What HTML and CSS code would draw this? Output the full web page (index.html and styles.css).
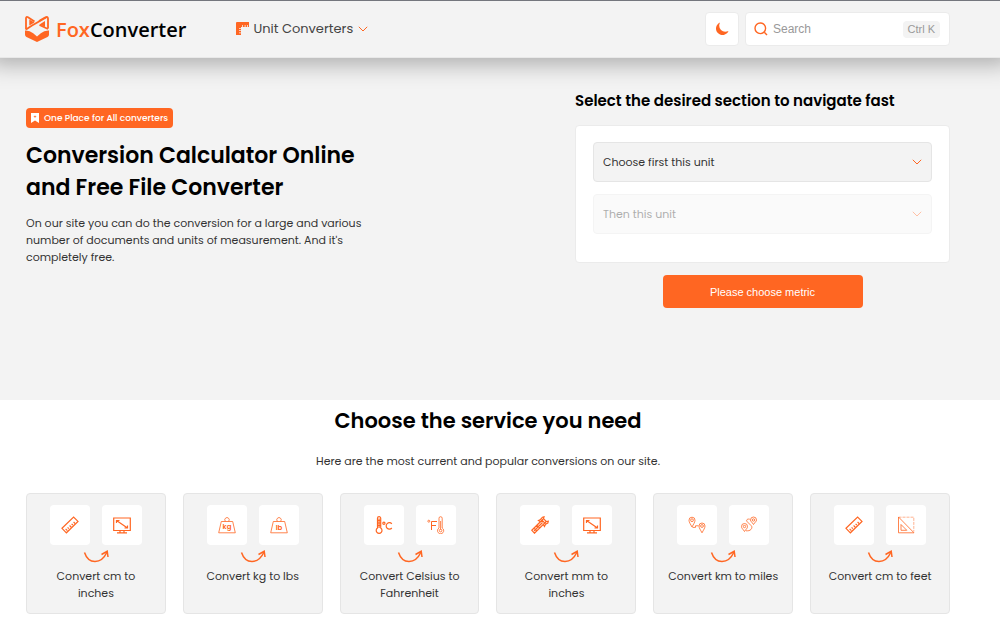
FILE: index.html
```html
<!DOCTYPE html>
<html lang="en">

<head>
    <meta charset="UTF-8">
    <meta name="viewport" content="width=device-width, initial-scale=1.0">
    <title>FoxConverter</title>
    <link rel="stylesheet" href="styles.css">
</head>

<body>
    <!-- shared icons -->
    <svg class="sprite" aria-hidden="true">
        <symbol id="chevron" viewBox="0 0 10 6">
            <path d="M.8 .8 5 5 9.2 .8" />
        </symbol>
        <symbol id="arrow" viewBox="0 0 26 13">
            <path d="M1.500 2.500C3.500 8.500 7.500 11.500 12 11.500C17 11.500 21.500 7.500 24 2" />
            <path d="M18.500 4.500 24.200 1.300 25 7" />
        </symbol>
        <symbol id="ruler" viewBox="0 0 18 18">
            <path d="M1 12.300 12.600 1 17 5.400 5.400 16.800Z" />
            <path d="M4.600 12.800 6.400 14.600M6.600 11.400 7.800 12.600M8.600 9.500 10.400 11.300M10.600 7.800 11.800 9M12.600 6 14.200 7.600" />
        </symbol>
        <symbol id="monitor" viewBox="0 0 18 18">
            <path d="M.7 2H17.300V14.500H.7ZM7 14.500V16.500M11 14.500V16.500M4 16.800H14M3.500 4.500 14.500 12M3.500 7V4.500H6.500M14.500 9.500V12H11.500" />
        </symbol>
        <symbol id="kg" viewBox="0 0 18 18">
            <path d="M3.300 5.500H14.700L17.300 16.800H.7ZM7.400 5.300A2.200 2.200 0 1 1 10.600 5.300" />
            <text class="unit" x="9" y="13">kg</text>
        </symbol>
        <symbol id="lb" viewBox="0 0 18 18">
            <path d="M3.300 5.500H14.700L17.300 16.800H.7ZM7.400 5.300A2.200 2.200 0 1 1 10.600 5.300" />
            <text class="unit" x="9" y="14">lb</text>
        </symbol>
        <symbol id="celsius" viewBox="0 0 18 18">
            <path d="M2.500 12V2.300A1.600 1.600 0 0 1 5.700 2.300V12A2.900 2.900 0 1 1 2.500 12ZM4.100 2.500V12M2.500 4.500H5.700M2.500 7H5.700M2.500 9.500H5.700" />
            <circle cx="8.900" cy="7.200" r="1.100" />
            <path d="M16.800 7.800A3.200 3.200 0 1 0 16.800 12" />
        </symbol>
        <symbol id="fahrenheit" viewBox="0 0 18 18">
            <path d="M12 12V2.300A1.600 1.600 0 0 1 15.200 2.300V12A3.100 3.100 0 1 1 12 12ZM13.600 5V13.500" />
            <circle cx="13.600" cy="14.600" r="1.300" />
            <circle cx="1.800" cy="5.200" r="1" />
            <path stroke-width="1" d="M4.500 14V5.500H10M4.500 9.500H9" />
        </symbol>
        <symbol id="caliper" viewBox="0 0 18 18">
            <path d="M.8 14.300 11 4.200 13.800 7 3.500 17.200ZM3 12.200 5.800 15M6 9.200 8.800 12M3 15 11.500 6.500" />
            <path d="M9.500 5.700 7.500 4.500 9.500 3.500 11.500 1.200 13 .8 12.500 2.700 11 4.200M12.500 2.700 15.300 5.500 13.800 7M15.300 5.500 17.300 5.200 16.800 7 14.500 8.300 13.500 10.500 12.300 8.500" />
        </symbol>
        <symbol id="pins" viewBox="0 0 18 18">
            <path d="M4 11C2.500 8.200 1 6.200 1 4.200A3 3 0 0 1 7 4.200C7 6.200 5.500 8.200 4 11ZM14 16.800C12.500 14 11 12 11 10A3 3 0 0 1 17 10C17 12 15.500 14 14 16.800ZM4.500 11.400H7.500V9.800H10.500" />
            <circle cx="4" cy="4.200" r="1.400" />
            <circle cx="14" cy="10" r="1.400" />
        </symbol>
        <symbol id="route" viewBox="0 0 18 18">
            <path d="M4.500 15.500C3 13 1.500 12.500 1.500 10.500A3 3 0 0 1 7.500 10.500C7.500 12.500 6 13 4.500 15.500ZM13.500 8.500C12 6 10.500 5.500 10.500 4A3 3 0 0 1 16.500 4C16.500 5.500 15 6 13.500 8.500ZM9.800 3.200C7 2.500 5.500 4.500 7.500 6L11 9.500C13 11 11.500 14.800 7.500 14.800H6" />
            <circle cx="4.500" cy="10.500" r="1.200" />
            <circle cx="13.500" cy="4" r="1.200" />
        </symbol>
        <symbol id="triangle" viewBox="0 0 18 18">
            <path d="M1.500 1V16.800H17ZM4 8.500V14.300H9.800Z" />
            <path stroke-width=".5" stroke-dasharray="3 1" d="M1.500 1.200H16.800V15.500" />
        </symbol>
    </svg>

    <header class="header">
        <a class="logo" href="#">
            <svg class="logo-icon" viewBox="0 0 24 26" aria-hidden="true">
                <path fill="none" stroke="currentColor" stroke-width="1.800" stroke-linejoin="round" d="M1 13.500V2.200Q1.200 .3 3 1.200L9.500 5.500M14 5L20.500 1.300Q22.800 .3 23 2.500V12.500" />
                <path fill="none" stroke="currentColor" stroke-width="1.800" stroke-linejoin="round" d="M1 13.500 7 9.500 21 1.500M23 13 14.500 9" />
                <path fill="currentColor" d="M4.300 3.500 9.500 6.500 4.300 9.500ZM20 5V11L14.500 8.500Z" />
                <path fill="currentColor" d="M0 14.500Q4.500 14.200 8.200 17.200L12 20.500 15.800 17.200Q19.500 14.200 24 14.500V18.500Q24 20 22.500 21L12 26 1.500 21Q0 20 0 18.500Z" />
            </svg>
            <span class="logo-text"><span class="logo-fox">Fox</span>Converter</span>
        </a>
        <nav class="nav">
            <button class="nav-item" type="button">
                <svg class="nav-icon" viewBox="0 0 14 14" aria-hidden="true">
                    <path fill="currentColor" d="M0 1Q0 0 1 0H13V5H11.800V3H11V5H9.500V3H8.700V5H7V3H6.200V5H5V6H3V6.800H5V8.300H3V9.100H5V10.500H3V11.300H5V13H0Z" />
                </svg>
                Unit Converters
                <svg class="chevron" aria-hidden="true"><use href="#chevron" /></svg>
            </button>
        </nav>
        <button class="theme" type="button" aria-label="Dark mode">
            <svg class="moon" viewBox="0 0 14 14" aria-hidden="true">
                <path fill="currentColor" d="M5 .5A6.500 6.500 0 1 0 13.500 9Q9 11 6 8T5 .5Z" />
            </svg>
        </button>
        <form class="search">
            <svg class="search-icon" viewBox="0 0 14 14" aria-hidden="true">
                <circle cx="6.300" cy="6.300" r="5.300" />
                <path d="M10.300 10.300 13 13" />
            </svg>
            <input class="search-input" type="text" placeholder="Search" aria-label="Search">
            <kbd class="shortcut">Ctrl K</kbd>
        </form>
    </header>

    <main>
        <section class="hero">
            <div class="intro">
                <span class="badge">
                    <svg class="badge-icon" viewBox="0 0 8 10" aria-hidden="true">
                        <path fill="currentColor" fill-rule="evenodd" d="M0 0H8V10L4 7.500 0 10ZM3.700 2.400V3.300H2.800V4H3.700V4.900H4.300V4H5.200V3.300H4.300V2.400Z" />
                    </svg>
                    One Place for All converters
                </span>
                <h1 class="title">Conversion Calculator Online and Free File Converter</h1>
                <p class="text">On our site you can do the conversion for a large and various number of documents and units of measurement. And it's completely free.</p>
            </div>
            <form class="picker">
                <h2 class="picker-title">Select the desired section to navigate fast</h2>
                <div class="picker-box">
                    <div class="field">
                        <select class="select" aria-label="First unit">
                            <option>Choose first this unit</option>
                        </select>
                        <svg class="chevron" aria-hidden="true"><use href="#chevron" /></svg>
                    </div>
                    <div class="field field-off">
                        <select class="select" aria-label="Second unit" disabled>
                            <option>Then this unit</option>
                        </select>
                        <svg class="chevron" aria-hidden="true"><use href="#chevron" /></svg>
                    </div>
                </div>
                <button class="submit" type="button">Please choose metric</button>
            </form>
        </section>

        <section class="services">
            <h2 class="services-title">Choose the service you need</h2>
            <p class="services-text">Here are the most current and popular conversions on our site.</p>
            <div class="cards">
                <a class="card" href="#">
                    <span class="tiles">
                        <span class="tile"><svg class="icon"><use href="#ruler" /></svg></span>
                        <span class="tile"><svg class="icon"><use href="#monitor" /></svg></span>
                    </span>
                    <svg class="arrow"><use href="#arrow" /></svg>
                    <span class="card-text">Convert cm to inches</span>
                </a>
                <a class="card" href="#">
                    <span class="tiles">
                        <span class="tile"><svg class="icon thin"><use href="#kg" /></svg></span>
                        <span class="tile"><svg class="icon thin"><use href="#lb" /></svg></span>
                    </span>
                    <svg class="arrow"><use href="#arrow" /></svg>
                    <span class="card-text">Convert kg to lbs</span>
                </a>
                <a class="card" href="#">
                    <span class="tiles">
                        <span class="tile"><svg class="icon"><use href="#celsius" /></svg></span>
                        <span class="tile"><svg class="icon thin"><use href="#fahrenheit" /></svg></span>
                    </span>
                    <svg class="arrow"><use href="#arrow" /></svg>
                    <span class="card-text">Convert Celsius to Fahrenheit</span>
                </a>
                <a class="card" href="#">
                    <span class="tiles">
                        <span class="tile"><svg class="icon"><use href="#caliper" /></svg></span>
                        <span class="tile"><svg class="icon"><use href="#monitor" /></svg></span>
                    </span>
                    <svg class="arrow"><use href="#arrow" /></svg>
                    <span class="card-text">Convert mm to inches</span>
                </a>
                <a class="card" href="#">
                    <span class="tiles">
                        <span class="tile"><svg class="icon thin"><use href="#pins" /></svg></span>
                        <span class="tile"><svg class="icon thin"><use href="#route" /></svg></span>
                    </span>
                    <svg class="arrow"><use href="#arrow" /></svg>
                    <span class="card-text">Convert km to miles</span>
                </a>
                <a class="card" href="#">
                    <span class="tiles">
                        <span class="tile"><svg class="icon"><use href="#ruler" /></svg></span>
                        <span class="tile"><svg class="icon thin"><use href="#triangle" /></svg></span>
                    </span>
                    <svg class="arrow"><use href="#arrow" /></svg>
                    <span class="card-text">Convert cm to feet</span>
                </a>
            </div>
        </section>
    </main>
</body>

</html>
```
FILE: styles.css
```css
* {
    box-sizing: border-box;
}

body {
    margin: 0;
    background-color: #fff;
    color: #333;
    font-family: Poppins, Inter, sans-serif;
    font-size: 11px;
    line-height: 17px;
}

h1, h2, p {
    margin: 0;
}

h1, h2 {
    color: #000;
    font-weight: 600;
}

a {
    color: inherit;
    text-decoration: none;
}

.sprite {
    display: none;
}

.chevron {
    width: 10px;
    height: 6px;
    fill: none;
    stroke: #ff6622;
}

/* header */
.header {
    position: relative;
    display: flex;
    align-items: center;
    padding: 11px 50px 11px 25px;
    border-top: 1px solid #74767d;
    border-bottom: 1px solid #e8e8e8;
    background-color: #f3f3f3;
    box-shadow: 0 -5px 22px 11px rgb(0 0 0 / 30%);
}

.logo {
    display: flex;
    align-items: center;
    gap: 7px;
}

.logo-icon {
    width: 24px;
    height: 26px;
    color: #ff6622;
}

.logo-text {
    color: #000;
    font-family: "Open Sans", sans-serif;
    font-size: 20px;
    font-weight: 600;
}

.logo-fox {
    color: #ff6622;
}

.nav {
    flex: 1;
    padding-left: 50px;
}

.nav-item {
    display: flex;
    align-items: center;
    gap: 3px;
    padding: 0;
    border: 0;
    background: none;
    color: #444;
    font-family: inherit;
    font-size: 13px;
}

.nav-icon {
    width: 14px;
    height: 14px;
    color: #ff6622;
}

.nav-item .chevron {
    margin-left: 2px;
}

.theme {
    display: grid;
    place-items: center;
    width: 34px;
    height: 34px;
    margin-right: 6px;
    padding: 0;
    border: 1px solid #ebebeb;
    border-radius: 4px;
    background-color: #fff;
}

.moon {
    width: 14px;
    height: 14px;
    color: #ff6622;
}

.search {
    display: flex;
    align-items: center;
    gap: 5px;
    width: 205px;
    height: 34px;
    padding: 0 9px 0 8px;
    border: 1px solid #ebebeb;
    border-radius: 4px;
    background-color: #fff;
    font-family: "Liberation Sans", sans-serif;
}

.search-icon {
    flex: none;
    width: 14px;
    height: 14px;
    fill: none;
    stroke: #ff6622;
    stroke-width: 1.4;
}

.search-input {
    flex: 1;
    min-width: 0;
    padding: 0;
    border: 0;
    outline: 0;
    background: none;
    font-family: inherit;
    font-size: 12px;
}

.search-input::placeholder {
    color: #999;
}

.shortcut {
    padding: 0 5px;
    border-radius: 4px;
    background-color: #f3f3f3;
    color: #999;
    font-family: inherit;
    font-size: 11px;
}

/* hero */
.hero {
    display: flex;
    justify-content: space-between;
    min-height: 342px;
    padding: 34px 50px 34px 26px;
    background-color: #f3f3f3;
}

.intro {
    max-width: 360px;
    padding-top: 16px;
}

.badge {
    display: inline-flex;
    align-items: center;
    gap: 5px;
    height: 20px;
    padding: 0 5px;
    border-radius: 4px;
    background-color: #ff6622;
    color: #fff;
    font-size: 9px;
    font-weight: 500;
}

.badge-icon {
    width: 8px;
    height: 10px;
}

.title {
    margin-top: 12px;
    font-size: 22px;
    line-height: 32px;
}

.text {
    margin-top: 11px;
}

.picker {
    display: flex;
    flex-direction: column;
    width: 375px;
}

.picker-title {
    font-size: 15px;
}

.picker-box {
    display: grid;
    gap: 12px;
    margin-top: 16px;
    padding: 16px 17px 28px;
    border: 1px solid #ebebeb;
    border-radius: 4px;
    background-color: #fff;
}

.field {
    display: grid;
    align-items: center;
}

.field-off {
    opacity: 0.4;
}

.field > * {
    grid-area: 1 / 1;
}

.field .chevron {
    justify-self: end;
    margin-right: 10px;
    pointer-events: none;
}

.select {
    width: 100%;
    height: 40px;
    padding: 0 9px;
    border: 1px solid #e5e5e5;
    border-radius: 4px;
    background-color: #f3f3f3;
    color: #333;
    font-family: inherit;
    font-size: 11px;
    appearance: none;
}

.select:disabled {
    color: #333;
    opacity: 1;
}

.submit {
    align-self: center;
    width: 200px;
    height: 33px;
    margin-top: 12px;
    border: 0;
    border-radius: 4px;
    background-color: #ff6622;
    color: #fff;
    font-family: "Liberation Sans", sans-serif;
    font-size: 11px;
}

/* services */
.services {
    padding: 5px 50px 9px 26px;
    text-align: center;
}

.services-title {
    font-size: 21px;
    line-height: 32px;
}

.services-text {
    margin-top: 16px;
}

.cards {
    display: grid;
    grid-template-columns: repeat(6, 1fr);
    gap: 17px;
    margin-top: 23px;
}

.card {
    display: flex;
    flex-direction: column;
    align-items: center;
    padding: 11px 12px;
    border: 1px solid #e5e5e5;
    border-radius: 4px;
    background-color: #f3f3f3;
}

.tiles {
    display: flex;
    gap: 12px;
}

.tile {
    display: grid;
    place-items: center;
    width: 40px;
    height: 40px;
    border-radius: 4px;
    background-color: #fff;
}

.icon {
    width: 18px;
    height: 18px;
    fill: none;
    stroke: #ff6622;
    stroke-width: 1.2;
}

.thin {
    stroke-width: 0.8;
}

.unit {
    font-size: 7px;
    font-weight: 600;
    text-anchor: middle;
    fill: #ff6622;
    stroke: none;
}

.arrow {
    width: 26px;
    height: 13px;
    margin: 5px 0;
    fill: none;
    stroke: #ff6622;
    stroke-width: 1.5;
}
```
